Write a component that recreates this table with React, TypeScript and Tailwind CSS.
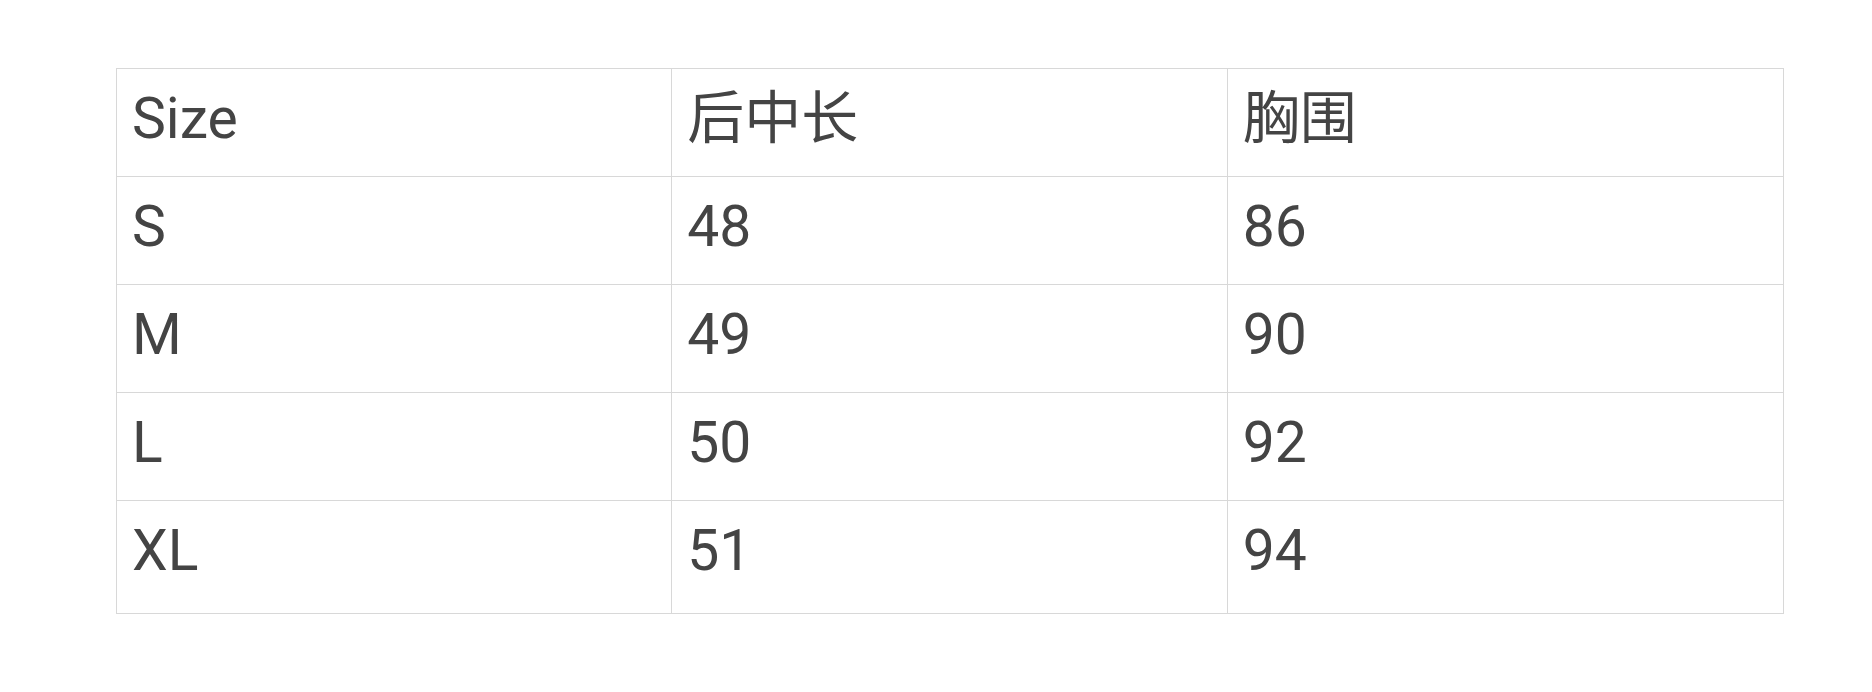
import React from 'react';

const rows = [
  ['Size', '后中长', '胸围'],
  ['S', '48', '86'],
  ['M', '49', '90'],
  ['L', '50', '92'],
  ['XL', '51', '94'],
];

const App: React.FC = () => {
  return (
    <div
      className="min-h-[692px] bg-white pt-[68px] pl-[116px]"
      style={{ fontFamily: 'Roboto, "Noto Sans CJK SC", sans-serif' }}
    >
      <div className="w-[1668px] border border-[#d8d8d8] text-[#444444]">
        {rows.map((row, i) => (
          <div
            key={i}
            className={`grid grid-cols-3 ${i === rows.length - 1 ? 'h-[112px]' : 'h-[108px] border-b border-[#d8d8d8]'}`}
          >
            {row.map((cell, j) => (
              <div
                key={j}
                className={`pl-[15px] pt-[21px] text-[57px] leading-[58px] ${j < 2 ? 'border-r border-[#d8d8d8]' : ''}`}
              >
                {cell}
              </div>
            ))}
          </div>
        ))}
      </div>
    </div>
  );
};

export default App;
